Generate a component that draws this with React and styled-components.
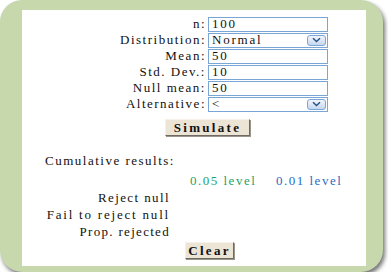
import React from "react";
import styled, { createGlobalStyle } from "styled-components";

const Global = createGlobalStyle`
  html, body { margin: 0; padding: 0; background: #ffffff; }
  body { font-family: "Liberation Serif", "Times New Roman", serif; color: #111; }
`;

const Frame = styled.div`
  box-sizing: border-box;
  width: 383px;
  height: 272px;
  background: #c7d8ad;
  border-radius: 22px;
  box-shadow: 2px 3px 4px rgba(0, 0, 0, 0.55);
  padding: 10px 17px 6px 22px;
`;

const Panel = styled.div`
  box-sizing: border-box;
  width: 344px;
  height: 256px;
  background: #ffffff;
  padding-top: 6px;
  display: flex;
  flex-direction: column;
`;

const Form = styled.div`
  display: grid;
  grid-template-columns: 184px 120px;
  grid-auto-rows: 16px;
  column-gap: 2px;
  align-items: center;
`;

const Label = styled.label`
  text-align: right;
  font-size: 13px;
  letter-spacing: 1.5px;
  line-height: 16px;
  white-space: nowrap;
`;

const Field = styled.div`
  box-sizing: border-box;
  height: 15px;
  border: 1px solid #7aa6d6;
  display: flex;
  align-items: center;
  padding-left: 3px;
  font-size: 13px;
  letter-spacing: 1.8px;
  background: #fff;
  position: relative;
`;

const Arrow = styled.span`
  position: absolute;
  right: 1px;
  top: 1px;
  width: 19px;
  height: 11px;
  border-radius: 3px;
  border: 1px solid #7aa6d6;
  background: linear-gradient(#f1f6fc, #c4d8f0);
  display: flex;
  align-items: center;
  justify-content: center;
  box-sizing: border-box;
`;

const ButtonRow = styled.div`
  display: flex;
  padding-left: ${(p) => p.$left || 0}px;
  margin-top: ${(p) => p.$top || 0}px;
`;

const Button = styled.button`
  box-sizing: border-box;
  height: 17px;
  padding: 0;
  background: #ece4d4;
  border: 1px solid;
  border-color: #f6f2ea #6f6a62 #6f6a62 #f6f2ea;
  box-shadow: 1px 1px 0 #9a958d;
  font-family: "Liberation Serif", "Times New Roman", serif;
  font-size: 13px;
  font-weight: bold;
  letter-spacing: 2.3px;
  color: #111;
  line-height: 15px;
  width: ${(p) => p.$w}px;
`;

const Heading = styled.div`
  font-size: 13px;
  letter-spacing: 1.5px;
  margin-top: 18px;
  padding-left: 23px;
  line-height: 14px;
`;

const Results = styled.div`
  display: grid;
  grid-template-columns: 148px 86px 70px;
  grid-auto-rows: 17px;
  align-items: center;
  margin-top: 4px;
`;

const RLabel = styled.div`
  grid-column: 1;
  text-align: right;
  font-size: 13px;
  letter-spacing: ${(p) => p.$ls || 1.5}px;
  white-space: nowrap;
`;

const Level = styled.div`
  font-size: 13px;
  letter-spacing: 1.5px;
  color: ${(p) => p.$color};
  padding-left: ${(p) => p.$pad || 0}px;
  white-space: nowrap;
`;

const Chevron = () => (
  <svg width="9" height="6" viewBox="0 0 9 6">
    <path d="M1 1.2 L4.5 4.5 L8 1.2" fill="none" stroke="#2b4f86" strokeWidth="1.4" />
  </svg>
);

export default function App() {
  const rows = [
    ["n:", "100", false],
    ["Distribution:", "Normal", true],
    ["Mean:", "50", false],
    ["Std. Dev.:", "10", false],
    ["Null mean:", "50", false],
    ["Alternative:", "<", true],
  ];
  return (
    <>
      <Global />
      <Frame>
        <Panel>
          <Form>
            {rows.map(([l, v, sel]) => (
              <React.Fragment key={l}>
                <Label>{l}</Label>
                <Field>
                  {v}
                  {sel && (
                    <Arrow>
                      <Chevron />
                    </Arrow>
                  )}
                </Field>
              </React.Fragment>
            ))}
          </Form>
          <ButtonRow $left={143} $top={7}>
            <Button $w={85}>Simulate</Button>
          </ButtonRow>
          <Heading>Cumulative results:</Heading>
          <Results>
            <div />
            <Level $color="#22a36b" $pad={20}>0.05 level</Level>
            <Level $color="#2a6cc4" $pad={20}>0.01 level</Level>
            <RLabel $ls={1.4}>Reject null</RLabel>
            <RLabel $ls={1.8}>Fail to reject null</RLabel>
            <RLabel $ls={1.3}>Prop. rejected</RLabel>
          </Results>
          <ButtonRow $left={163} $top={2}>
            <Button $w={49}>Clear</Button>
          </ButtonRow>
        </Panel>
      </Frame>
    </>
  );
}
